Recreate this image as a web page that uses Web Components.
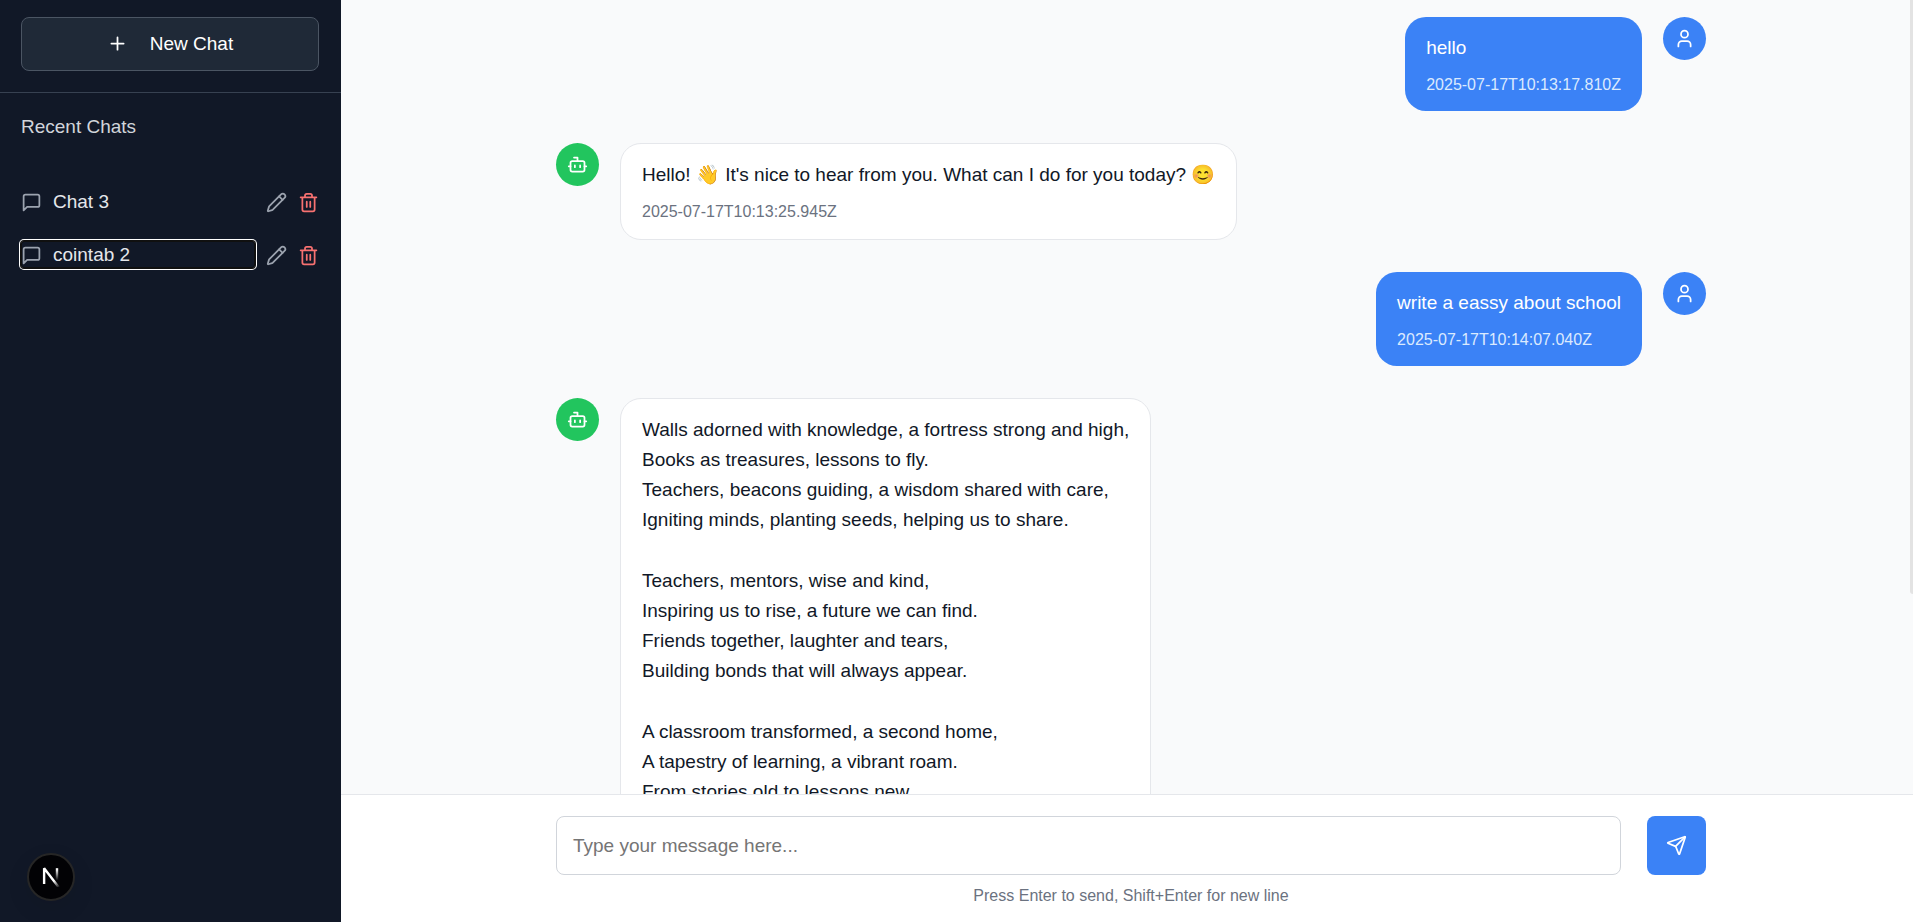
<!DOCTYPE html>
<html lang="en">
<head>
<meta charset="utf-8">
<meta name="viewport" content="width=device-width, initial-scale=1">
<title>Chat</title>
<style>
  body { margin: 0; font: 19px/27px "Liberation Sans", Arial, sans-serif; color: #111827; }
</style>
</head>
<body>
<chat-app>
  <chat-sidebar slot="sidebar">
    <chat-entry>Chat 3</chat-entry>
    <chat-entry active>cointab 2</chat-entry>
  </chat-sidebar>
  <chat-message from="user" time="2025-07-17T10:13:17.810Z"><p>hello</p></chat-message>
  <chat-message from="bot" time="2025-07-17T10:13:25.945Z"><p>Hello! 👋 It's nice to hear from you. What can I do for you today? 😊</p></chat-message>
  <chat-message from="user" time="2025-07-17T10:14:07.040Z"><p>write a eassy about school</p></chat-message>
  <chat-message from="bot"><p>Walls adorned with knowledge, a fortress strong and high,<br>Books as treasures, lessons to fly.<br>Teachers, beacons guiding, a wisdom shared with care,<br>Igniting minds, planting seeds, helping us to share.</p><p>Teachers, mentors, wise and kind,<br>Inspiring us to rise, a future we can find.<br>Friends together, laughter and tears,<br>Building bonds that will always appear.</p><p>A classroom transformed, a second home,<br>A tapestry of learning, a vibrant roam.<br>From stories old to lessons new,</p></chat-message>
  <chat-composer slot="composer"></chat-composer>
</chat-app>

<script>
const define = (name, html, setup) => {
  const template = document.createElement('template');
  template.innerHTML = html;
  customElements.define(name, class extends HTMLElement {
    constructor() {
      super();
      this.attachShadow({ mode: 'open' }).append(template.content.cloneNode(true));
    }
    connectedCallback() { if (setup) setup(this, this.shadowRoot); }
  });
};

const icons = {
  plus: '<path d="M5 12h14M12 5v14"/>',
  message: '<path d="M21 15a2 2 0 0 1-2 2H7l-4 4V5a2 2 0 0 1 2-2h14a2 2 0 0 1 2 2z"/>',
  pencil: '<path d="M21.174 6.812a1 1 0 0 0-3.986-3.987L3.842 16.174a2 2 0 0 0-.5.83l-1.321 4.352a.5.5 0 0 0 .623.622l4.353-1.32a2 2 0 0 0 .83-.497z"/><path d="m15 5 4 4"/>',
  trash: '<path d="M3 6h18M19 6v14a2 2 0 0 1-2 2H7a2 2 0 0 1-2-2V6M8 6V4a2 2 0 0 1 2-2h4a2 2 0 0 1 2 2v2M10 11v6M14 11v6"/>',
  user: '<path d="M19 21v-2a4 4 0 0 0-4-4H9a4 4 0 0 0-4 4v2"/><circle cx="12" cy="7" r="4"/>',
  bot: '<path d="M12 8V4H8"/><rect width="16" height="12" x="4" y="8" rx="2"/><path d="M2 14h2M20 14h2M15 13v2M9 13v2"/>',
  send: '<path d="M14.536 21.686a.5.5 0 0 0 .937-.024l6.5-19a.496.496 0 0 0-.635-.635l-19 6.5a.5.5 0 0 0-.024.937l7.93 3.18a2 2 0 0 1 1.112 1.11z"/><path d="m21.854 2.147-10.94 10.939"/>'
};

define('ui-icon', `
  <style>
    :host { display: block; flex: none; width: 21px; height: 21px; }
    svg { display: block; width: 100%; height: 100%; fill: none; stroke: currentColor; stroke-width: 2; stroke-linecap: round; stroke-linejoin: round; }
  </style>
  <svg viewBox="0 0 24 24" aria-hidden="true"></svg>`,
  (host, root) => { root.querySelector('svg').innerHTML = icons[host.getAttribute('name')] || ''; });

define('chat-app', `
  <style>
    :host { display: grid; grid-template-columns: 341px minmax(0, 1fr); height: 100vh; overflow: hidden; }
    main { position: relative; display: flex; flex-direction: column; min-width: 0; min-height: 0; background: #f9fafb; }
    .scroll { flex: 1; min-height: 0; overflow: hidden; padding: 17px 21px 0 29px; }
    .thread { display: flex; flex-direction: column; gap: 32px; max-width: 1150px; margin: 0 auto; }
    .thumb { position: absolute; top: 0; right: 0; width: 3px; height: 594px; background: #e3e3e3; border-bottom-left-radius: 3px; }
  </style>
  <slot name="sidebar"></slot>
  <main>
    <div class="scroll"><div class="thread"><slot></slot></div></div>
    <div class="thumb"></div>
    <slot name="composer"></slot>
  </main>`);

define('chat-sidebar', `
  <style>
    :host { position: relative; display: flex; flex-direction: column; background: #111827; color: #fff; }
    header { padding: 17px 22px 21px 21px; border-bottom: 1px solid #374151; }
    .new { display: flex; align-items: center; justify-content: center; gap: 22px; width: 100%; height: 54px; box-sizing: border-box; padding: 0 0 2px; border: 1px solid #4b5563; border-radius: 8px; background: #1f2937; color: #fff; font: inherit; }
    nav { padding: 20px 22px 20px 21px; }
    h2 { margin: 0 0 48px; font: inherit; color: #d1d5db; }
    .list { display: flex; flex-direction: column; gap: 26px; }
    .badge { position: absolute; left: 27px; bottom: 21px; display: flex; align-items: center; justify-content: center; width: 48px; height: 48px; box-sizing: border-box; padding: 0; border: 2px solid #262626; border-radius: 50%; background: #020205; box-shadow: 0 8px 24px rgba(0, 0, 0, .08); }
    .badge svg { display: block; width: 20px; height: 20px; }
  </style>
  <header><button class="new" type="button"><ui-icon name="plus"></ui-icon>New Chat</button></header>
  <nav>
    <h2>Recent Chats</h2>
    <div class="list"><slot></slot></div>
  </nav>
  <button class="badge" type="button" aria-label="Open dev tools">
    <svg viewBox="0 0 15 15" fill="none" stroke-width="1.8" aria-hidden="true">
      <defs>
        <linearGradient id="diagonal" gradientUnits="userSpaceOnUse" x1="9.5" y1="10.5" x2="13.6" y2="15.4"><stop stop-color="#fff"/><stop offset="1" stop-color="#fff" stop-opacity="0"/></linearGradient>
        <linearGradient id="stem" gradientUnits="userSpaceOnUse" x1="11.8" y1="1.5" x2="11.8" y2="10"><stop stop-color="#fff"/><stop offset="1" stop-color="#fff" stop-opacity="0"/></linearGradient>
      </defs>
      <path d="M13.3 15.2 2.34 1v11.8" stroke="url(#diagonal)" stroke-linejoin="bevel"/>
      <path d="M12 .9v11.6" stroke="url(#stem)"/>
    </svg>
  </button>`);

define('chat-entry', `
  <style>
    :host { display: flex; align-items: center; gap: 11px; }
    button { display: flex; align-items: center; padding: 0; border: 0; background: none; color: #9ca3af; font: inherit; }
    ui-icon { padding-top: 2px; }
    .open { flex: 1; gap: 11px; height: 27px; border-radius: 3px; text-align: left; }
    .name { color: #e5e7eb; }
    .delete { color: #f87171; }
    :host([active]) .open { box-shadow: inset 0 0 0 1px #101010, 0 0 0 1px #101010, 0 0 0 2px #fff; }
  </style>
  <button class="open" type="button"><ui-icon name="message"></ui-icon><span class="name"><slot></slot></span></button>
  <button type="button" aria-label="Rename"><ui-icon name="pencil"></ui-icon></button>
  <button class="delete" type="button" aria-label="Delete"><ui-icon name="trash"></ui-icon></button>`);

define('chat-message', `
  <style>
    :host { display: flex; align-items: flex-start; gap: 21px; }
    :host([from="user"]) { flex-direction: row-reverse; }
    .avatar { display: flex; flex: none; align-items: center; justify-content: center; width: 43px; height: 43px; border-radius: 50%; background: #22c55e; color: #fff; }
    .bubble { min-width: 0; padding: 16px 21px; border: 1px solid #e5e7eb; border-radius: 21px; background: #fff; line-height: 30px; }
    .text { display: flex; flex-direction: column; gap: 31px; }
    ::slotted(p) { margin: 0; }
    time { display: block; margin-top: 11px; font-size: 16px; line-height: 21px; color: #6b7280; }
    time:empty { display: none; }
    :host([from="user"]) .avatar { background: #3b82f6; }
    :host([from="user"]) .bubble { border: 0; background: #3b82f6; color: #fff; }
    :host([from="user"]) time { color: #dbeafe; }
    :host([from="bot"]) time { padding-bottom: 1px; }
  </style>
  <div class="avatar"><ui-icon></ui-icon></div>
  <div class="bubble"><div class="text"><slot></slot></div><time></time></div>`,
  (host, root) => {
    root.querySelector('ui-icon').shadowRoot.querySelector('svg').innerHTML = icons[host.getAttribute('from')];
    root.querySelector('time').textContent = host.getAttribute('time') || '';
  });

define('chat-composer', `
  <style>
    :host { display: block; flex: none; padding: 21px 21px 16px 29px; border-top: 1px solid #e5e7eb; background: #fff; }
    form { max-width: 1150px; margin: 0 auto; }
    .row { display: flex; gap: 26px; }
    textarea { flex: 1; min-width: 0; height: 59px; box-sizing: border-box; margin: 0; padding: 15px 16px; border: 1px solid #d1d5db; border-radius: 8px; background: #fff; color: #111827; font: inherit; resize: none; overflow: hidden; outline: none; }
    textarea::placeholder { color: #757575; }
    button { display: flex; flex: none; align-items: center; justify-content: center; width: 59px; height: 59px; padding: 0; border: 0; border-radius: 8px; background: #3b82f6; color: #fff; }
    p { margin: 10px 0 0; font-size: 16px; line-height: 21px; text-align: center; color: #6b7280; }
  </style>
  <form>
    <div class="row">
      <textarea rows="1" placeholder="Type your message here..." aria-label="Message"></textarea>
      <button type="button" aria-label="Send"><ui-icon name="send"></ui-icon></button>
    </div>
    <p>Press Enter to send, Shift+Enter for new line</p>
  </form>`);
</script>
</body>
</html>
